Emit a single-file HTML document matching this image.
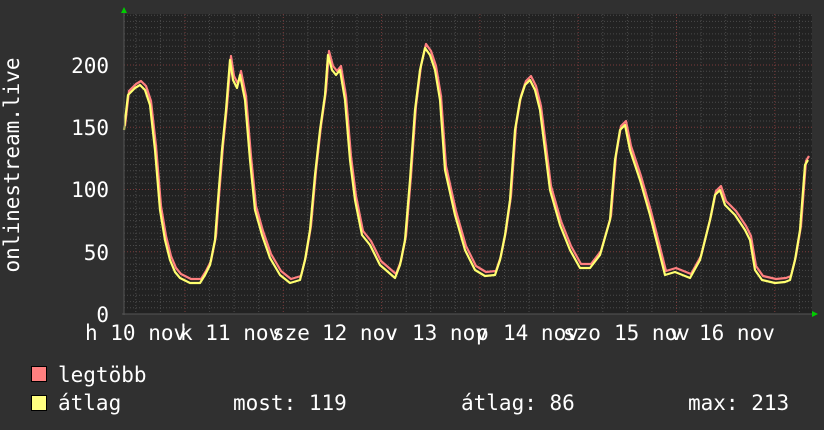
<!DOCTYPE html>
<html><head><meta charset="utf-8"><style>
html,body{margin:0;padding:0;background:#303030;width:824px;height:430px;overflow:hidden}
text{font-family:"DejaVu Sans Mono","Liberation Mono",monospace;fill:#fff;font-size:21px}
</style></head><body>
<svg width="824" height="430" xmlns="http://www.w3.org/2000/svg">
<rect x="0" y="0" width="824" height="430" fill="#303030"/>
<rect x="124" y="14" width="688" height="300" fill="#222"/>
<g id="grid"></g>
<g stroke="#ff8080" stroke-width="2.2" fill="none" stroke-linejoin="round"><polyline id="red"/></g>
<g stroke="#ffff70" stroke-width="2.2" fill="none" stroke-linejoin="round"><polyline id="yel"/></g>
<line x1="124" y1="10" x2="124" y2="315" stroke="#555"/>
<line x1="122" y1="314" x2="814" y2="314" stroke="#555"/>
<polygon points="121,13 127,13 124,7" fill="#0c0"/>
<polygon points="812,311 812,317 818,314" fill="#0c0"/>
<g text-anchor="end">
<text x="109" y="73">200</text><text x="109" y="135">150</text><text x="109" y="197">100</text><text x="109" y="260">50</text><text x="109" y="322">0</text>
</g>
<text transform="translate(19,165) rotate(-90)" text-anchor="middle">onlinestream.live</text>
<g>
<text x="85" y="340">h 10 nov</text><text x="180" y="340">k 11 nov</text><text x="272" y="340">sze</text><text x="322" y="340">12 nov</text>
<text x="385" y="340">v</text><text x="412" y="340">13 nov</text><text x="476" y="340">p</text><text x="503" y="340">14 nov</text>
<text x="563" y="340">szo</text><text x="614" y="340">15 nov</text><text x="670" y="340">v</text><text x="699" y="340">16 nov</text>
</g>
<rect x="31.5" y="366.5" width="15" height="15" fill="#ff8080" stroke="#000"/>
<rect x="31.5" y="395.5" width="15" height="15" fill="#ffff80" stroke="#000"/>
<text x="58" y="382">legtöbb</text>
<text x="58" y="410">átlag</text>
<text x="233" y="410">most: 119</text>
<text x="461" y="410">átlag: 86</text>
<text x="688" y="410">max: 213</text>
</svg>
<script>
var g=document.getElementById('grid'),s='';
for(var i=1;i<=48;i++){var y=314-i*1.245*5;if(y<14)break;var maj=i%10==0;
s+='<line x1="124" x2="812" y1="'+y.toFixed(1)+'" y2="'+y.toFixed(1)+'" stroke="'+(maj?'#7a3a3a':'#4a4a4a')+'" stroke-dasharray="1,2"/>';}
for(var x=185-98.3;x<812;x+=24.575){if(x<125)continue;var maj=Math.abs(((x-185)/98.3)-Math.round((x-185)/98.3))<0.01;
s+='<line y1="14" y2="314" x1="'+x.toFixed(1)+'" x2="'+x.toFixed(1)+'" stroke="'+(maj?'#7a3a3a':'#4a4a4a')+'" stroke-dasharray="1,2"/>';}
g.innerHTML=s;
var p=[124,130,128,95,135,88,140,85,145,90,150,105,155,150,160,210,165,240,170,260,175,272,180,278,190,283,200,283,205,275,210,265,215,240,218,200,222,150,226,110,230,60,233,80,237,88,240,75,245,100,250,160,255,210,262,235,270,258,280,275,290,283,300,280,305,260,310,230,315,175,320,130,325,95,328,55,332,70,336,75,340,70,345,100,350,160,355,200,362,235,370,245,380,265,395,278,400,265,405,240,410,180,415,110,420,70,425,48,430,55,435,70,440,100,445,170,455,215,465,250,475,270,485,276,495,275,500,260,505,235,510,200,515,130,520,100,525,85,530,80,535,90,540,110,545,150,550,190,560,225,570,250,580,268,590,268,600,255,610,220,615,160,620,130,625,125,630,150,635,165,640,180,650,215,660,255,665,275,675,272,690,278,700,260,710,220,715,195,720,190,725,205,735,215,745,230,750,240,755,270,762,280,775,283,785,282,790,280,795,260,800,230,805,165,808,160];
var a='',b='';for(var i=0;i<p.length;i+=2){a+=p[i]+','+p[i+1]+' ';b+=(p[i]+1)+','+(p[i+1]-4)+' ';}
document.getElementById('yel').setAttribute('points',a);
document.getElementById('red').setAttribute('points',b);
</script>
</body></html>
